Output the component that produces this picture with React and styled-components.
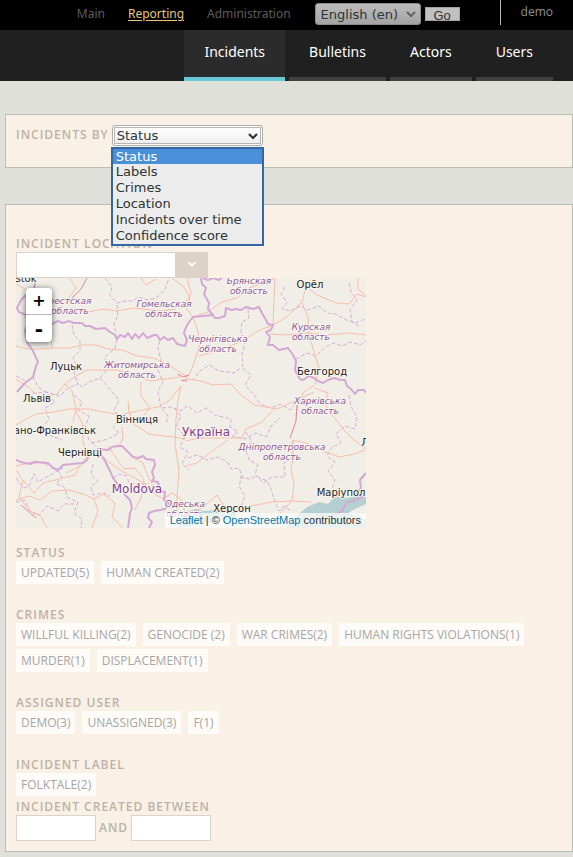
import React, { useState } from "react";
import styled, { createGlobalStyle } from "styled-components";

const GlobalStyle = createGlobalStyle`
  *, *::before, *::after { box-sizing: border-box; }
  body {
    margin: 0;
    background: #e0e0db;
    font-family: "Open Sans", "Noto Sans", sans-serif;
    font-size: 12px;
  }
  button, input, select { font: inherit; margin: 0; }
`;

const TopBar = styled.header`
  display: flex;
  justify-content: flex-end;
  align-items: flex-start;
  height: 30px;
  padding-right: 20px;
  background: #000;
`;

const TopNav = styled.nav`
  display: flex;
  gap: 23px;
  margin-right: 24px;
`;

const TopLink = styled.a`
  font-family: "Noto Sans", "Open Sans", sans-serif;
  font-size: 12px;
  line-height: 27px;
  color: ${(p) => (p.$active ? "#e9c77b" : "#5c5c5c")};
  text-decoration: ${(p) => (p.$active ? "underline" : "none")};
  text-underline-offset: 2px;
`;

const LanguageForm = styled.form`
  display: flex;
  gap: 4px;
  margin-right: 40px;
  padding-top: 3px;
`;

const SelectShell = styled.span`
  display: grid;
  align-items: center;
  > * { grid-area: 1 / 1; }
  > svg {
    justify-self: end;
    margin-right: ${(p) => p.$inset}px;
    pointer-events: none;
  }
`;

const LanguageSelect = styled.select`
  appearance: none;
  width: 106px;
  height: 22px;
  padding: 0 5px;
  border: 1px solid #8b8b8b;
  border-radius: 3px;
  background: linear-gradient(#bdbdbd, #a3a3a3);
  color: #2e3436;
  font-family: "DejaVu Sans", sans-serif;
  font-size: 13px;
`;

const GoButton = styled.button`
  align-self: flex-start;
  width: 35px;
  height: 14px;
  margin-top: 4px;
  padding: 0;
  border: 1px solid #a89f98;
  background: #c0c0c0;
  color: #333;
  font-family: "Liberation Sans", Arial, sans-serif;
  font-size: 13px;
  line-height: 16px;
`;

const Account = styled.a`
  height: 25px;
  padding-left: 20px;
  border-left: 1px solid #bbb;
  font-size: 12px;
  line-height: 24px;
  color: #8f8f8f;
  text-decoration: none;
`;

const MainNav = styled.nav`
  display: flex;
  justify-content: flex-end;
  gap: 4px;
  padding-right: 20px;
  background: #202020;
`;

const Tab = styled.a`
  height: 51px;
  padding: 0 20px;
  border-bottom: 4px solid ${(p) => (p.$active ? "#66c9d6" : "#404040")};
  background: ${(p) => (p.$active ? "#2b2b2b" : "transparent")};
  color: #fff;
  font-family: "Noto Sans", "Open Sans", sans-serif;
  font-size: 14px;
  line-height: 44px;
  text-decoration: none;
`;

const Page = styled.main`
  display: flex;
  flex-direction: column;
  gap: 36px;
  padding: 33px 0 5px 5px;
`;

const Panel = styled.section`
  padding: ${(p) => (p.$tall ? "31px 10px 10px" : "10px 10px 21px")};
  border: 1px solid #bcbdb4;
  background: #f9f0e6;
`;

const labelText = `
  margin: 0;
  color: #beb2a8;
  font-size: 12px;
  font-weight: 600;
  line-height: 16px;
  letter-spacing: 1px;
  text-transform: uppercase;
`;

const Heading = styled.h2`${labelText}`;
const FieldLabel = styled.label`
  display: block;
  ${labelText}
`;

const ChartRow = styled.div`
  display: flex;
  align-items: flex-start;
  gap: 3px;
  > label { line-height: 20px; }
`;

const Picker = styled.div`
  position: relative;
  width: 151px;
`;

const ChartSelect = styled.select`
  appearance: none;
  width: 151px;
  height: 21px;
  padding: 0 4px;
  border: 1px solid #aeaeae;
  border-radius: 3px;
  background: linear-gradient(#fff, #ededed);
  box-shadow: inset 0 0 0 1px #fff, inset 0 0 0 2px #b4b4b4;
  color: #2e3436;
  font-family: "DejaVu Sans", sans-serif;
  font-size: 13px;
`;

const OptionList = styled.ul`
  position: absolute;
  z-index: 5;
  top: 22px;
  left: -1px;
  width: 153px;
  margin: 0;
  padding: 0;
  border: 2px solid #3465a4;
  background: #ececec;
  list-style: none;
`;

const Option = styled.li`
  padding-left: 3px;
  background: ${(p) => (p.$active ? "#4a90d9" : "transparent")};
  color: ${(p) => (p.$active ? "#fff" : "#2e3436")};
  font-family: "DejaVu Sans", sans-serif;
  font-size: 13px;
  line-height: 16px;
  cursor: default;
  &:first-child { line-height: 15px; }
`;

const LocationRow = styled.div`
  display: flex;
  width: 192px;
`;

const TextBox = styled.input`
  width: ${(p) => p.$width}px;
  height: 26px;
  padding: 0 5px;
  border: 1px solid #ddd2c7;
  border-radius: 0;
  background: #fff;
`;

const DropButton = styled.button`
  display: grid;
  place-items: center;
  width: 32px;
  height: 26px;
  padding: 0 0 2px;
  border: 0;
  background: #ddd2c7;
`;

const MapBox = styled.div`
  position: relative;
  width: 350px;
  max-width: 100%;
  height: 250px;
  margin-bottom: 17px;
  overflow: hidden;
  background: #f1eee8;
  > svg { display: block; }
`;

const ZoomControl = styled.div`
  position: absolute;
  top: 10px;
  left: 10px;
  width: 26px;
  border-radius: 4px;
  background: #fff;
  box-shadow: 0 1px 6px rgba(0, 0, 0, 0.6);
`;

const ZoomButton = styled.button`
  display: block;
  width: 26px;
  height: 27px;
  padding: 0;
  border: 0;
  border-bottom: ${(p) => (p.$first ? "1px solid #bbb" : "0")};
  background: none;
  color: #000;
  font-family: "DejaVu Sans", sans-serif;
  font-size: ${(p) => (p.$first ? 16 : 20)}px;
  font-weight: bold;
  line-height: 26px;
`;

const Attribution = styled.div`
  position: absolute;
  right: 0;
  bottom: 0;
  padding: 0 5px;
  background: rgba(255, 255, 255, 0.7);
  color: #333;
  font-family: "Liberation Sans", Arial, sans-serif;
  font-size: 11px;
  line-height: 15px;
  white-space: nowrap;
  a { color: #0078a8; text-decoration: none; }
`;

const FilterGroup = styled.section`
  margin-bottom: ${(p) => (p.$tight ? 0 : 20)}px;
`;

const TagList = styled.div`
  display: flex;
  flex-wrap: wrap;
  gap: 3px 7px;
  padding-bottom: 3px;
`;

const Tag = styled.button`
  height: 23px;
  padding: 0 5px;
  border: 0;
  background: #fefbf8;
  color: #a6a6a6;
  font-size: 12px;
  line-height: 22px;
  text-transform: uppercase;
`;

const DateRow = styled.div`
  display: flex;
  align-items: center;
  gap: 3px;
`;

const Chevron = ({ color, size = 12 }) => (
  <svg width={size} height={size} viewBox="0 0 12 12" fill="none" aria-hidden="true">
    <path d="M2 4l4 4 4-4" stroke={color} strokeWidth="2.2" />
  </svg>
);

const BORDERS = [
  "M17 0L19 5 18 12 10 17 5 22 1 30 3 34 10 37 12 46 9 52 11 64 17 73 22 84 20 88 17 99 9 105 1 114",
  "M11 47L18 49 25 45 36 46 42 43 47 45 53 43 58 45 66 45 69 48 74 48 80 51 89 50 94 54 99 57 101 61 104 57 109 59 112 55 116 61 119 56 123 60 127 55 131 60 138 57 141 57 144 62 148 59 152 62 157 60 161 66 169 68 171 62 168 55 170 49 173 44 177 39 187 38 197 37 199 40 203 40 209 38 210 30 216 32 220 31 225 32 230 29 237 31 243 29 246 35 250 42 252 46 257 47 255 52 250 54 254 59 252 67 257 67 263 72 272 70 277 77 280 83 279 92 281 96 284 101 287 102 293 98 298 100 302 103 307 105 312 102 318 100 325 102 329 102 331 108 335 111 339 116 342 112 348 112 350 115",
  "M185 0L186 6 190 10 188 16 193 25 192 31 197 37M187 0L192 2 197 0 203 2 206 0",
  "M0 182L5 184 14 186 19 184 32 185 37 190 42 192 47 187 56 186 67 185 71 182 73 177 82 171 92 172 96 169 101 168 106 168 112 174 117 179 122 180 127 178 130 181 138 182 139 187 136 194 138 200 136 203 142 204 143 209 144 213 149 214 148 222 153 226 149 231 144 232 138 233 133 235 132 240 136 244 133 250",
  "M83 175L88 181 91 187 95 195 97 200 103 208 109 217 114 222 116 230 114 235 112 250",
  "M350 195L344 202 345 210 341 215 346 219 337 223 331 224 326 233 314 239",
];

const REGIONS = [
  "M89 0L96 9 94 17 101 25 109 23 117 23 122 19 132 22 140 20 149 12 153 0",
  "M101 27L102 38 98 45 100 58",
  "M56 47L58 57 64 63 64 72 57 80 62 90 58 95 62 106 52 110 44 118 30 114 12 116",
  "M101 61L99 70 89 79 91 91 84 100 73 104 66 109 61 105",
  "M144 63L142 71 145 82 142 92 147 104 142 113 145 130 152 138 150 146",
  "M84 100L93 110 103 122 98 132 104 140 97 149 103 155 92 161 75 165",
  "M0 98L10 103 18 100 22 109 31 115 39 124 29 130 33 141 27 149 35 158 46 162",
  "M58 117L66 124 62 132 73 138 69 150 73 162 80 168",
  "M146 130L156 129 164 133 172 128 181 135 190 130 199 137 215 141 214 149 222 154 216 158 229 161 240 155 250 159 255 148 264 140",
  "M232 31L233 40 226 44 225 54 229 65 226 76 227 87 219 95 203 93 193 87 184 93 177 102",
  "M269 9L265 16 271 24 266 31 275 33 284 28 292 32 303 28 311 35 320 36 330 42 340 45 349 41",
  "M333 5L335 14 341 22 334 31 336 44 343 48",
  "M280 81L291 75 300 78 308 70 317 65 326 68 335 64 344 67 350 63",
  "M227 90L235 97 229 107 239 118 244 126 255 130 265 126 274 132 280 125",
  "M230 154L236 164 229 170 233 182 242 187 239 196 247 205 256 199 269 199 268 185 277 178 277 162",
  "M333 117L335 129 341 139 339 151 329 148 320 156 325 165 316 169 311 178 319 184 312 193 319 202 315 214 323 220",
  "M172 180L181 177 191 182 202 179 211 184 215 191 223 190 226 198 223 208 229 218 225 229",
  "M224 199L234 201 240 198 251 203 255 211 259 224 263 233 268 228 275 233",
  "M158 130L165 138 160 149 169 158 164 169 172 174 166 186 173 192",
  "M0 200L8 210 13 208 18 196 22 204 36 196 47 190",
  "M42 192L46 200 40 206 48 209 52 220 62 224 58 235 66 241 65 250",
  "M77 186L75 197 82 203 75 209 77 217 88 215 94 218",
  "M0 224L9 222 14 233 22 238 31 228 42 233 48 226 60 226",
  "M97 200L103 196 111 198 113 205 122 207 133 205",
];

const ROADS = [
  "M0 6L12 13 19 20 28 25 38 25",
  "M54 0L60 10 52 21 42 32",
  "M43 33L58 32 72 34 88 31 101 33 118 30 145 33 160 31",
  "M125 0L130 7 140 1M156 0L168 9 174 20 170 30 177 39",
  "M35 57L36 70 24 71 12 71 0 68M35 70L53 70 66 67 80 67 92 71 106 72 121 78 137 80 150 85 162 93 170 98",
  "M0 101L12 109 24 120 41 116 49 106 60 98 71 92 86 92 101 92 120 97 134 103 150 101 164 99",
  "M49 106L56 113 60 130 57 144M125 104L125 118 134 130 128 137",
  "M0 147L12 140 20 136 38 134 54 131 72 131 88 134 105 137 121 133 142 129 153 123 165 108",
  "M59 131L67 147 67 163 71 178 64 188 50 195",
  "M112 123L113 134 118 146 133 156 157 159 170 161",
  "M106 149L107 160 102 170M165 108L162 122 160 141 159 166 163 193 161 218 162 242",
  "M177 40L181 50 184 65 180 79 174 95 167 104M177 39L192 34 206 24 221 20 233 10 248 5 259 0",
  "M259 0L258 21 257 47 244 52 224 64 204 72 183 78",
  "M257 47L272 38 286 24 290 8 301 17 320 25 333 26 341 16 350 19",
  "M286 25L292 39 293 57 298 74 303 90 299 106",
  "M254 56L270 57 290 55 311 57 333 55 350 57",
  "M342 0L342 11 350 18M170 24L175 16 171 0",
  "M170 101L185 103 197 107 215 106 225 117 238 127 250 129 261 131 272 126 285 120 298 114",
  "M298 107L287 115 282 126 280 138M298 110L312 115 309 126 317 138 329 153 339 163 350 171",
  "M170 163L183 160 198 160 213 160 226 160 230 151 246 144 257 132",
  "M0 188L20 183 32 187M170 188L181 185 195 174 212 162",
  "M276 162L290 165 301 169 309 174 324 179 338 176 349 172",
  "M276 163L277 181 275 191 278 206 276 223 264 235 259 246",
  "M170 237L186 230 201 217 208 228 229 229 256 224 276 223 295 224",
  "M84 177L98 188 107 194 119 200 132 208 140 217 151 223 160 228",
  "M92 168L101 181 108 191 119 190 128 201 126 217 119 232",
  "M118 180L127 185 132 198 140 214M0 192L7 203 3 219 14 233 24 237 31 250",
  "M0 222L13 218 24 222 36 213 53 212 67 216 78 221 82 233 76 250",
  "M78 221L88 216 99 225 96 239 107 250M7 202L18 215 27 205 43 201 59 197 64 188",
  "M149 220L156 215 165 221 169 234",
];

const HIGHWAYS = [
  "M71 0L65 11 54 22M161 96L167 99 173 97M165 102L171 103M281 127L280 143 274 160M5 227L20 240",
];

const LABELS = [
  { x: 10, y: 4, t: ["stok"], k: "city" },
  { x: 294, y: 10, t: ["Орёл"], k: "city" },
  { x: 50, y: 92, t: ["Луцьк"], k: "city" },
  { x: 21, y: 124, t: ["Львів"], k: "city" },
  { x: 121, y: 145, t: ["Вінниця"], k: "city" },
  { x: 306, y: 97, t: ["Белгород"], k: "city" },
  { x: 36, y: 156, t: ["вано-Франківськ"], k: "city" },
  { x: 64, y: 178, t: ["Чернівці"], k: "city" },
  { x: 216, y: 234, t: ["Херсон"], k: "city" },
  { x: 328, y: 218, t: ["Маріуполь"], k: "city" },
  { x: 349, y: 168, t: ["Л"], k: "city" },
  { x: 54, y: 26, t: ["рестская", "область"], k: "region" },
  { x: 148, y: 29, t: ["Гомельская", "область"], k: "region" },
  { x: 233, y: 6, t: ["Брянская", "область"], k: "region" },
  { x: 295, y: 52, t: ["Курская", "область"], k: "region" },
  { x: 202, y: 64, t: ["Чернігівська", "область"], k: "region" },
  { x: 121, y: 90, t: ["Житомирська", "область"], k: "region" },
  { x: 304, y: 126, t: ["Харківська", "область"], k: "region" },
  { x: 266, y: 172, t: ["Дніпропетровська", "область"], k: "region" },
  { x: 169, y: 229, t: ["Одеська", "область"], k: "region" },
  { x: 190, y: 158, t: ["Україна"], k: "country" },
  { x: 121, y: 215, t: ["Moldova"], k: "country" },
];

const MapLabel = styled.text`
  font-family: "DejaVu Sans", sans-serif;
  font-size: ${(p) => ({ city: 10, region: 9, country: 12 })[p.$kind]}px;
  font-style: ${(p) => (p.$kind === "region" ? "italic" : "normal")};
  fill: ${(p) => ({ city: "#222", region: "#8d5a94", country: "#80408a" })[p.$kind]};
  stroke: #f8f5f1;
  stroke-width: 2px;
  stroke-linejoin: round;
  paint-order: stroke;
  text-anchor: middle;
`;

const UkraineMap = () => (
  <svg width="350" height="250" viewBox="0 0 350 250" fill="none" role="img" aria-label="Map of incident locations">
    <path d="M283 236L291 229 303 224 312 226 318 219 331 220 341 218 350 217V226L339 231 332 235 350 242V250H270ZM168 234L180 231 188 233 202 232 212 236 222 232 219 240 162 250Z" fill="#b5d0d0" />
    <g stroke="#cf9fd4" strokeWidth="1" strokeDasharray="4 2" opacity="0.8">
      {REGIONS.map((d) => <path key={d} d={d} />)}
    </g>
    <g stroke="#f9bda8" strokeWidth="1" strokeLinejoin="round">
      {ROADS.map((d) => <path key={d} d={d} />)}
    </g>
    <g stroke="#e8849a" strokeWidth="1">
      {HIGHWAYS.map((d) => <path key={d} d={d} />)}
    </g>
    <g stroke="#d4a8d4" strokeWidth="2" strokeLinejoin="round">
      {BORDERS.map((d) => <path key={d} d={d} />)}
    </g>
    {LABELS.map(({ x, y, t, k }) => (
      <MapLabel key={t[0]} x={x} y={y} $kind={k}>
        {t.map((line, i) => <tspan key={line} x={x} dy={i * 10}>{line}</tspan>)}
      </MapLabel>
    ))}
  </svg>
);

const CHARTS = ["Status", "Labels", "Crimes", "Location", "Incidents over time", "Confidence score"];

const FILTERS = [
  { title: "Status", tags: ["Updated(5)", "Human created(2)"] },
  {
    title: "Crimes",
    tags: ["Willful killing(2)", "Genocide (2)", "War crimes(2)", "Human rights violations(1)", "Murder(1)", "Displacement(1)"],
  },
  { title: "Assigned user", tags: ["Demo(3)", "Unassigned(3)", "F(1)"] },
  { title: "Incident label", tags: ["Folktale(2)"], tight: true },
];

export default function App() {
  const [chart, setChart] = useState("Status");
  const [open, setOpen] = useState(true);

  const choose = (name) => {
    setChart(name);
    setOpen(false);
  };

  return (
    <>
      <GlobalStyle />
      <TopBar>
        <TopNav aria-label="Sections">
          <TopLink href="#main">Main</TopLink>
          <TopLink href="#reporting" $active>Reporting</TopLink>
          <TopLink href="#administration">Administration</TopLink>
        </TopNav>
        <LanguageForm onSubmit={(e) => e.preventDefault()}>
          <SelectShell $inset={4}>
            <LanguageSelect aria-label="Language" defaultValue="en">
              <option value="en">English (en)</option>
            </LanguageSelect>
            <Chevron color="#666" />
          </SelectShell>
          <GoButton type="submit">Go</GoButton>
        </LanguageForm>
        <Account href="#account">demo</Account>
      </TopBar>
      <MainNav aria-label="Reports">
        <Tab href="#incidents" $active>Incidents</Tab>
        <Tab href="#bulletins">Bulletins</Tab>
        <Tab href="#actors">Actors</Tab>
        <Tab href="#users">Users</Tab>
      </MainNav>
      <Page>
        <Panel>
          <ChartRow>
            <FieldLabel htmlFor="chart">Incidents by</FieldLabel>
            <Picker>
              <SelectShell $inset={4}>
                <ChartSelect
                  id="chart"
                  value={chart}
                  onMouseDown={(e) => { e.preventDefault(); setOpen(!open); }}
                  onChange={(e) => choose(e.target.value)}
                >
                  {CHARTS.map((name) => <option key={name}>{name}</option>)}
                </ChartSelect>
                <Chevron color="#2e3436" />
              </SelectShell>
              {open && (
                <OptionList role="listbox" aria-label="Incidents by">
                  {CHARTS.map((name) => (
                    <Option
                      key={name}
                      role="option"
                      aria-selected={name === chart}
                      $active={name === chart}
                      onClick={() => choose(name)}
                    >
                      {name}
                    </Option>
                  ))}
                </OptionList>
              )}
            </Picker>
          </ChartRow>
        </Panel>
        <Panel $tall>
          <FieldLabel htmlFor="location">Incident location</FieldLabel>
          <LocationRow>
            <TextBox id="location" type="text" $width={160} />
            <DropButton type="button" aria-label="Show locations">
              <Chevron color="#fff" size={10} />
            </DropButton>
          </LocationRow>
          <MapBox>
            <UkraineMap />
            <ZoomControl>
              <ZoomButton type="button" aria-label="Zoom in" $first>+</ZoomButton>
              <ZoomButton type="button" aria-label="Zoom out">-</ZoomButton>
            </ZoomControl>
            <Attribution>
              <a href="#leaflet">Leaflet</a> | © <a href="#osm">OpenStreetMap</a> contributors
            </Attribution>
          </MapBox>
          {FILTERS.map(({ title, tags, tight }) => (
            <FilterGroup key={title} $tight={tight}>
              <Heading>{title}</Heading>
              <TagList>
                {tags.map((tag) => <Tag key={tag} type="button">{tag}</Tag>)}
              </TagList>
            </FilterGroup>
          ))}
          <FieldLabel htmlFor="from">Incident created between</FieldLabel>
          <DateRow>
            <TextBox id="from" type="text" $width={80} />
            <FieldLabel htmlFor="to">and</FieldLabel>
            <TextBox id="to" type="text" $width={80} />
          </DateRow>
        </Panel>
      </Page>
    </>
  );
}
